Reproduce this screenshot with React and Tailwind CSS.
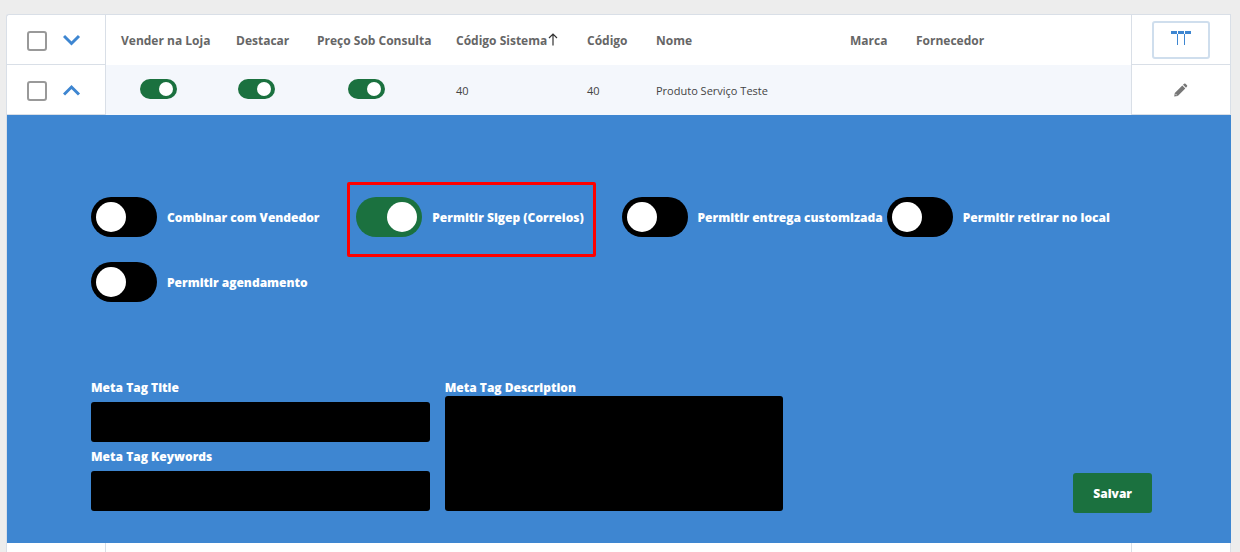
import { useState } from "react";

const shippingOptions = [
  { id: "vendedor", label: "Combinar com Vendedor", on: false },
  { id: "sigep", label: "Permitir Sigep (Correios)", on: true, highlight: true },
  { id: "customizada", label: "Permitir entrega customizada", on: false },
  { id: "retirar", label: "Permitir retirar no local", on: false },
  { id: "agendamento", label: "Permitir agendamento", on: false },
];

const headers = ["Vender na Loja", "Destacar", "Preço Sob Consulta", "Código Sistema", "Código", "Nome", "Marca", "Fornecedor"];

function Chevron({ up }) {
  return (
    <svg width="18" height="12" viewBox="0 0 18 12" fill="none" stroke="#3e86d1" strokeWidth="3">
      <path d={up ? "M1 10.5 L8.5 3 L16 10.5" : "M1 2 L8.5 9.5 L16 2"} />
    </svg>
  );
}

function SmallToggle({ label }) {
  return (
    <input
      type="checkbox"
      role="switch"
      aria-label={label}
      defaultChecked
      className="relative block mx-auto mb-[2px] w-[37px] h-5 appearance-none rounded-full bg-black checked:bg-[#1b713f] cursor-pointer before:absolute before:top-[3px] before:left-1 before:size-[14px] before:rounded-full before:bg-white checked:before:left-[19px]"
    />
  );
}

function ShippingToggle({ option }) {
  return (
    <div className="relative flex items-center gap-[10px] h-10">
      <input
        id={option.id}
        type="checkbox"
        role="switch"
        defaultChecked={option.on}
        className="relative shrink-0 w-[66px] h-10 appearance-none rounded-full bg-black checked:bg-[#1b713f] cursor-pointer before:absolute before:top-[5px] before:left-[5px] before:size-[30px] before:rounded-full before:bg-white checked:before:left-[31px]"
      />
      <label htmlFor={option.id} className="pt-[2px] whitespace-nowrap">
        {option.label}
      </label>
      {option.highlight && (
        <div className="absolute -top-[15px] -left-[9px] w-[249px] h-[75px] rounded-xs border-3 border-[#ff0000] pointer-events-none" />
      )}
    </div>
  );
}

function SelectCell({ open, onToggle, label }) {
  return (
    <div className="flex items-center gap-4 pl-5">
      <input
        type="checkbox"
        aria-label={label}
        className="mt-[2px] size-5 appearance-none rounded-[3px] border-2 border-[#999] bg-white checked:bg-[#3e86d1]"
      />
      <button type="button" aria-label="Expandir" onClick={onToggle} className="cursor-pointer">
        <Chevron up={open} />
      </button>
    </div>
  );
}

function ProductPanel() {
  return (
    <form
      onSubmit={(e) => e.preventDefault()}
      className="bg-[#3e86d1] pt-[82px] pb-[30px] pl-[84px] pr-[79px] text-xs leading-5 font-extrabold text-white"
    >
      <div className="grid grid-cols-4 gap-y-[25px]">
        {shippingOptions.map((option) => (
          <ShippingToggle key={option.id} option={option} />
        ))}
      </div>

      <div className="grid grid-cols-3 h-[135px] mt-[76px]">
        <div className="pr-[15px]">
          <label htmlFor="meta-title" className="block mb-1">Meta Tag Title</label>
          <input id="meta-title" type="text" className="block w-full h-10 px-3 mb-[5px] rounded-[3px] bg-black" />
          <label htmlFor="meta-keywords" className="block mb-1">Meta Tag Keywords</label>
          <input id="meta-keywords" type="text" className="block w-full h-10 px-3 rounded-[3px] bg-black" />
        </div>

        <div className="pr-[15px]">
          <label htmlFor="meta-description" className="block h-[18px]">Meta Tag Description</label>
          <textarea id="meta-description" className="block w-full h-[115px] p-3 resize-none rounded-[3px] bg-black" />
        </div>

        <div className="flex items-end justify-end">
          <button type="submit" className="h-10 px-5 pt-[2px] rounded-[3px] bg-[#1b713f] cursor-pointer">
            Salvar
          </button>
        </div>
      </div>
    </form>
  );
}

function App() {
  const [open, setOpen] = useState(true);

  const sideCell = "p-0 border-r border-[#d9dfe7]";
  const actionCell = "p-0 border-x border-[#d9dfe7]";
  const textCell = "p-0 pt-[2px] pl-[15px] whitespace-nowrap";

  return (
    <div className="h-screen overflow-hidden bg-[#ededed] pt-[14px] pl-[6px] pr-[9px] font-['Open_Sans',sans-serif]">
      <table className="w-full table-fixed border-separate border-spacing-0 rounded-tl-[3px] border-t border-l border-[#d9dfe7] bg-white text-left text-[#444]">
        <colgroup>
          <col className="w-[99px]" />
          <col className="w-[115px]" />
          <col className="w-[81px]" />
          <col className="w-[139px]" />
          <col className="w-[131px]" />
          <col className="w-[69px]" />
          <col className="w-[194px]" />
          <col className="w-[66px]" />
          <col />
          <col className="w-[100px]" />
        </colgroup>
        <thead>
          <tr className="h-[50px] text-xs text-[#666]">
            <th className={`${sideCell} border-b`}>
              <SelectCell label="Selecionar todos" />
            </th>
            {headers.map((title) => (
              <th key={title} className={`${textCell} font-bold`}>
                <span className="flex items-center gap-px">
                  {title}
                  {title === "Código Sistema" && (
                    <svg className="mb-1" width="10" height="13" viewBox="0 0 10 13" fill="none" stroke="#333" strokeWidth="1.2">
                      <path d="M5 12.5 V1.5 M1 5 L5 1 L9 5" />
                    </svg>
                  )}
                </span>
              </th>
            ))}
            <th className={`${actionCell} border-b`}>
              <button
                type="button"
                aria-label="Colunas"
                className="flex justify-center mx-auto pt-2 w-[58px] h-[38px] rounded-[3px] border-2 border-[#cfdeed] cursor-pointer"
              >
                <svg width="20" height="14" viewBox="0 0 20 14" fill="#3e86d1" shapeRendering="crispEdges">
                  <path d="M0 0h6v3H0z M7 0h6v3H7z M14 0h6v3h-6z M6 3h1v11H6z M13 3h1v11h-1z" />
                </svg>
              </button>
            </th>
          </tr>
        </thead>
        <tbody>
          <tr className="h-[50px] bg-[#f4f7fc] text-[11px]">
            <td className={`${sideCell} border-b bg-white`}>
              <SelectCell open={open} onToggle={() => setOpen(!open)} label="Selecionar Produto Serviço Teste" />
            </td>
            <td className="p-0 pr-[10px]"><SmallToggle label="Vender na Loja" /></td>
            <td className="p-0 pr-[10px]"><SmallToggle label="Destacar" /></td>
            <td className="p-0 pr-[10px]"><SmallToggle label="Preço Sob Consulta" /></td>
            <td className={textCell}>40</td>
            <td className={textCell}>40</td>
            <td className={textCell}>Produto Serviço Teste</td>
            <td></td>
            <td></td>
            <td className={`${actionCell} border-b bg-white`}>
              <button type="button" aria-label="Editar" className="block mx-auto cursor-pointer">
                <svg width="14" height="14" viewBox="0 0 14 14" fill="#777">
                  <path d="M0.2 13.5 L0.8 10 L8.3 2.5 L11.3 5.5 L3.8 13 Z M9 1.8 L10.1 0.7 Q10.8 0.1 11.5 0.7 L13 2.2 Q13.6 2.9 13 3.6 L12 4.7 Z" />
                  <path d="M1.4 10.9 L2.9 12.4" stroke="#fff" strokeWidth="0.8" />
                </svg>
              </button>
            </td>
          </tr>
          {open && (
            <tr>
              <td colSpan={10} className="p-0">
                <ProductPanel />
              </td>
            </tr>
          )}
          <tr className="h-[50px]">
            <td className={sideCell}></td>
            <td colSpan={8}></td>
            <td className={actionCell}></td>
          </tr>
        </tbody>
      </table>
    </div>
  );
}

export default App;
